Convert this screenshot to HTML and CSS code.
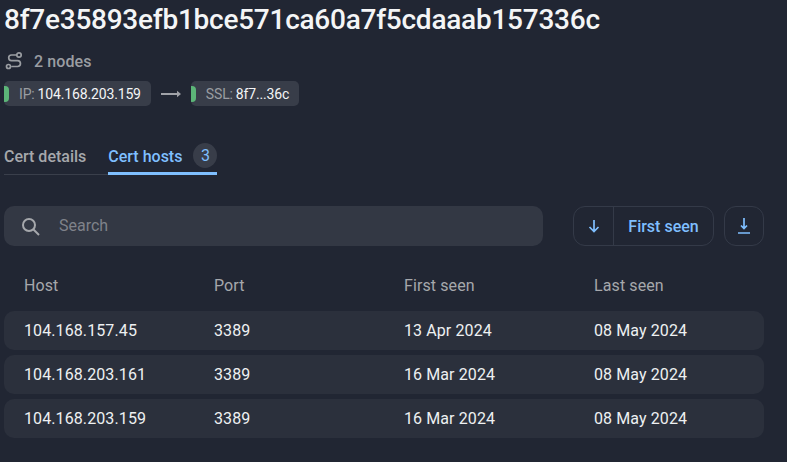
FILE: index.html
```html
<!DOCTYPE html>
<html lang="en">
<head>
<meta charset="utf-8">
<title>Cert hosts</title>
<link rel="stylesheet" href="styles.css">
</head>
<body>
<main class="page">
  <h1 class="title">8f7e35893efb1bce571ca60a7f5cdaaab157336c</h1>
  <div class="nodes">
    <svg class="nodes-icon" width="20" height="20" viewBox="0 0 20 20" fill="none" stroke="#9a9da2" stroke-width="1.7"><circle cx="15" cy="4" r="2.200"/><circle cx="4.500" cy="15.500" r="2"/><path d="M12 4H7.500a2.800 2.800 0 0 0 0 5.600h6a2.950 2.950 0 0 1 0 5.900H8" stroke-linecap="round"/></svg>
    <span>2 nodes</span>
  </div>
  <div class="path">
    <div class="chip"><i class="dot"></i><span class="chip-label">IP:</span><span class="chip-value">104.168.203.159</span></div>
    <svg class="arrow" width="20" height="10" viewBox="0 0 20 10"><path class="arrow-line" d="M0 4h16V1.800L20 5l-4 3.200V6H0z"/></svg>
    <div class="chip"><i class="dot"></i><span class="chip-label">SSL:</span><span class="chip-value">8f7...36c</span></div>
  </div>
  <nav class="tabs">
    <a class="tab">Cert details</a>
    <a class="tab tab-active">Cert hosts<span class="badge">3</span></a>
  </nav>
  <div class="toolbar">
    <div class="search">
      <svg width="22" height="22" viewBox="0 0 22 22" fill="none" stroke="#a6a8ac" stroke-width="2"><circle cx="8" cy="10" r="6"/><path d="m12.500 14.500 5.500 5.500"/></svg>
      <span class="search-text">Search</span>
    </div>
    <div class="sort">
      <span class="sort-dir"><svg width="12" height="14" viewBox="0 0 12 14" fill="none" stroke="#7fbfff" stroke-width="1.700"><path d="M6 1v11.500M1.500 8 6 12.500 10.500 8"/></svg></span>
      <span class="sort-label">First seen</span>
    </div>
    <div class="download"><svg width="14" height="16" viewBox="0 0 14 16" fill="none" stroke="#7fbfff" stroke-width="1.700"><path d="M7 0v10.500M4 7.500 7 10.500l3-3M1 15h12"/></svg></div>
  </div>
  <div class="table">
    <div class="row head"><span>Host</span><span>Port</span><span>First seen</span><span>Last seen</span></div>
    <div class="row item"><span>104.168.157.45</span><span>3389</span><span>13 Apr 2024</span><span>08 May 2024</span></div>
    <div class="row item"><span>104.168.203.161</span><span>3389</span><span>16 Mar 2024</span><span>08 May 2024</span></div>
    <div class="row item"><span>104.168.203.159</span><span>3389</span><span>16 Mar 2024</span><span>08 May 2024</span></div>
  </div>
</main>
</body>
</html>
```
FILE: styles.css
```css
* { box-sizing: border-box; }
html, body { margin: 0; height: 100%; }
body { background: #212633; color: #f1f2f4; font-family: Roboto, sans-serif; overflow: hidden; }
.page { width: 787px; height: 462px; padding: 0 23px 0 4px; }
.title { margin: 0; font-size: 28px; line-height: 40px; font-weight: 500; letter-spacing: -0.25px; color: #f4f5f6; white-space: nowrap; }
.nodes { display: flex; align-items: center; gap: 10px; height: 24px; margin-top: 9px; font-size: 16px; font-weight: 500; letter-spacing: 0.1px; color: #9a9da2; }
.path { display: flex; align-items: center; margin-top: 8px; height: 25px; }
.chip { display: flex; align-items: center; height: 25px; border-radius: 5px; background: #383d49; font-size: 14px; letter-spacing: -0.15px; padding-right: 10px; overflow: hidden; }
.dot { width: 5px; height: 16px; background: #5cb578; border-radius: 0 4px 4px 0; margin-right: 10px; }
.chip-label { color: #9a9da2; margin-right: 3px; }
.chip-value { color: #f4f5f6; }
.arrow { margin: 0 10px; }
.arrow-line { fill: #a0a2a8; }
.tabs { display: flex; margin-top: 31px; height: 38px; }
.tab { display: flex; align-items: center; height: 38px; padding-top: 2px; font-size: 16px; font-weight: 500; color: #a6a8ac; border-bottom: 1px solid #3a3f4b; padding-right: 22px; }
.tab-active { color: #7fbfff; border-bottom: 3px solid #7fbfff; padding-right: 0; padding-top: 4px; }
.badge { width: 24px; height: 25px; margin-top: -3px; margin-left: 11px; border-radius: 50%; background: #383d49; color: #7fbfff; font-size: 16px; font-weight: 400; display: flex; align-items: center; justify-content: center; }
.toolbar { display: flex; align-items: center; margin-top: 31px; height: 40px; }
.search { flex: 1; display: flex; align-items: center; gap: 16px; height: 40px; padding-left: 17px; border-radius: 10px; background: #333844; color: #7f828a; font-size: 16px; }
.search-text { padding-bottom: 2px; }
.sort { display: flex; height: 40px; margin-left: 30px; width: 141px; border: 1px solid #343a48; border-radius: 12px; }
.sort-dir { width: 40px; display: flex; align-items: center; justify-content: center; border-right: 1px solid #343a48; }
.sort-label { flex: 1; display: flex; align-items: center; justify-content: center; color: #7fbfff; font-size: 16px; font-weight: 500; }
.download { display: flex; align-items: center; justify-content: center; width: 40px; height: 40px; margin-left: 10px; border: 1px solid #343a48; border-radius: 12px; }
.table { margin-top: 19px; }
.row { display: grid; grid-template-columns: repeat(4, 190px); padding-left: 20px; font-size: 16px; letter-spacing: 0.1px; align-items: center; }
.head { height: 40px; color: #a6a8ac; margin-bottom: 6px; }
.item { height: 39px; margin-bottom: 5px; background: #2b303c; border-radius: 10px; color: #eef0f2; }
```
